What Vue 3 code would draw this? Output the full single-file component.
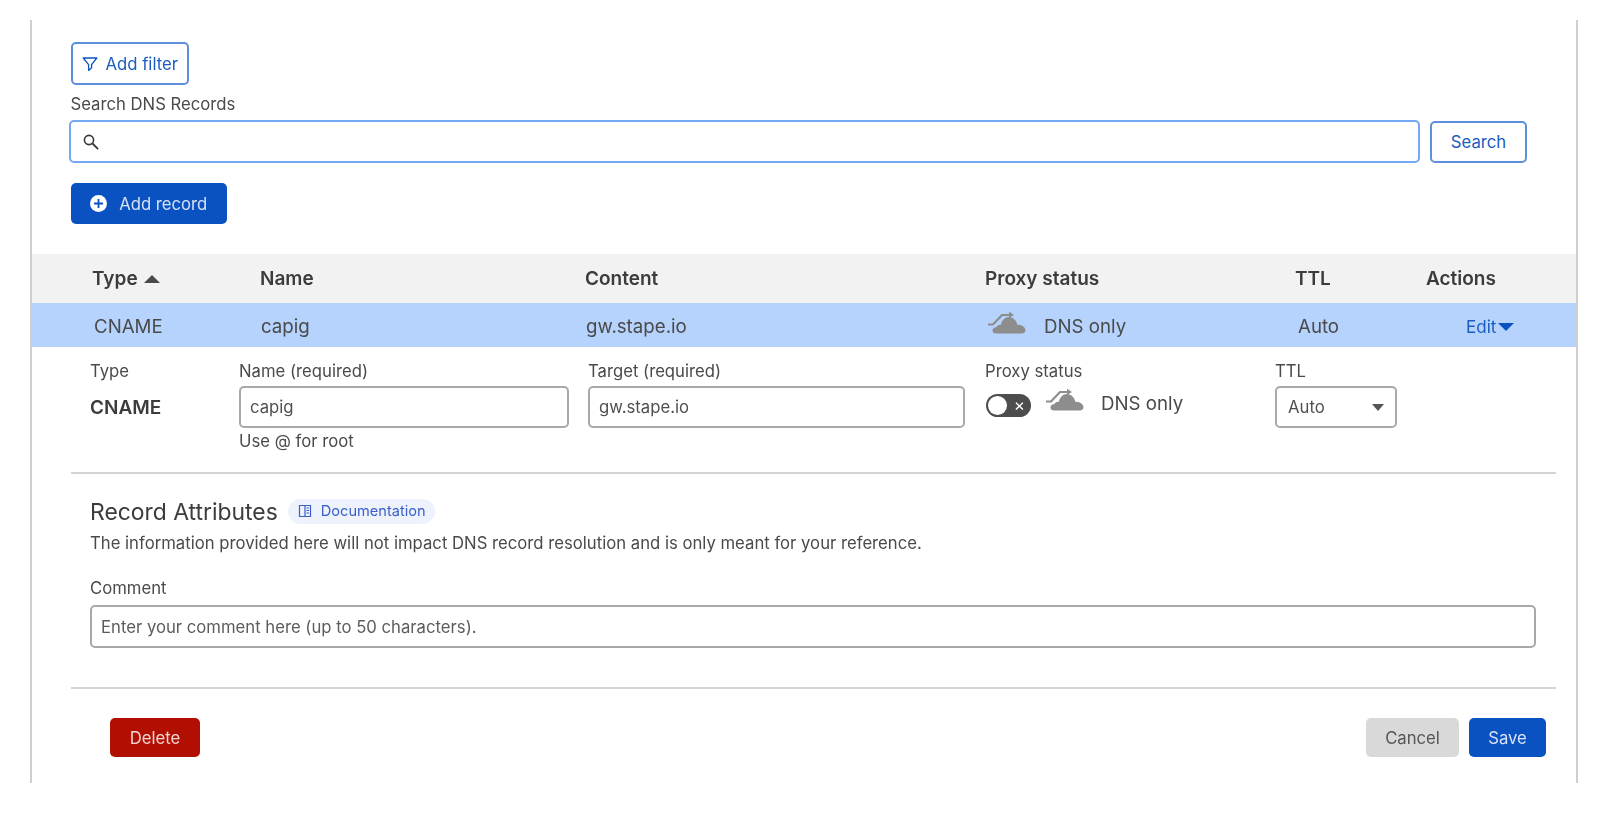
<script setup>
const columns = ["Name", "Content", "Proxy status", "TTL", "Actions"];
</script>

<template>
  <div class="frame">
    <div class="search-area">
      <button class="btn btn-outline filter-btn">
        <svg class="filter-icon" viewBox="0 0 16 16" width="16" height="16">
          <path d="M1.2 2h13.6L9.6 8.6v3.2L6.6 14.4V8.6z" fill="none" stroke="#0a55c4" stroke-width="1.3" stroke-linejoin="round" />
        </svg>
        Add filter
      </button>
      <label class="search-label">Search DNS Records</label>
      <div class="search-row">
        <div class="search-input">
          <svg viewBox="0 0 18 18" width="18" height="18">
            <circle cx="7" cy="7" r="4.6" fill="none" stroke="#36393a" stroke-width="1.6" />
            <path d="M10.5 10.5l5.6 5.6" stroke="#36393a" stroke-width="1.8" />
          </svg>
        </div>
        <button class="btn btn-outline search-btn">Search</button>
      </div>
      <button class="btn btn-primary add-btn">
        <svg viewBox="0 0 16 16" width="17" height="17">
          <circle cx="8" cy="8" r="8" fill="#fff" />
          <path d="M8 3.8v8.4M3.8 8h8.4" stroke="#0a51c2" stroke-width="1.7" />
        </svg>
        Add record
      </button>
    </div>

    <div class="table-head">
      <div class="type-head">Type <span class="sort-up"></span></div>
      <div v-for="col in columns" :key="col">{{ col }}</div>
    </div>
    <div class="table-row">
      <div>CNAME</div>
      <div>capig</div>
      <div>gw.stape.io</div>
      <div class="proxy">
        <svg class="cloud" viewBox="0 0 38 24" width="38" height="24">
          <path d="M0 14.500h5L14 5h8" fill="none" stroke="#8d8d8d" stroke-width="2.200" />
          <path d="M21 1.800l5 3.200-5 3z" fill="#8d8d8d" />
          <path d="M8 23.500c-2.200 0-3.500-1.400-3.500-3.100 0-1.900 1.700-3.400 3.800-3.100.8-1.800 2.500-2.800 4.500-2.500C14 10 17.300 6.800 21 7c4.400.2 7.500 3.600 8.300 7.800 3.900-.8 8.200 2.400 8.200 5.400 0 2-1.800 3.300-3.900 3.300z" fill="#8d8d8d" />
        </svg>
        <span>DNS only</span>
      </div>
      <div>Auto</div>
      <div class="edit">Edit<span class="edit-caret"></span></div>
    </div>

    <div class="edit-form">
      <div>
        <div class="field-label">Type</div>
        <div class="type-value">CNAME</div>
      </div>
      <div>
        <div class="field-label">Name (required)</div>
        <div class="text-input name-input">capig</div>
        <div class="hint">Use @ for root</div>
      </div>
      <div>
        <div class="field-label">Target (required)</div>
        <div class="text-input target-input">gw.stape.io</div>
      </div>
      <div>
        <div class="field-label">Proxy status</div>
        <div class="proxy-control">
          <span class="toggle">
            <span class="knob"></span>
            <span class="toggle-x">×</span>
          </span>
          <svg class="cloud" viewBox="0 0 38 24" width="38" height="24">
            <path d="M0 14.500h5L14 5h8" fill="none" stroke="#8d8d8d" stroke-width="2.200" />
            <path d="M21 1.800l5 3.200-5 3z" fill="#8d8d8d" />
            <path d="M8 23.500c-2.200 0-3.500-1.400-3.500-3.100 0-1.900 1.700-3.400 3.800-3.100.8-1.800 2.500-2.800 4.500-2.500C14 10 17.300 6.800 21 7c4.400.2 7.500 3.600 8.300 7.800 3.900-.8 8.200 2.400 8.200 5.400 0 2-1.800 3.300-3.900 3.300z" fill="#8d8d8d" />
          </svg>
          <span class="proxy-text">DNS only</span>
        </div>
      </div>
      <div>
        <div class="field-label">TTL</div>
        <div class="text-input ttl-select">Auto<span class="select-caret"></span></div>
      </div>
    </div>

    <div class="divider first"></div>

    <div class="attributes">
      <div class="attr-title">
        <h2>Record Attributes</h2>
        <span class="doc-pill">
          <svg viewBox="0 0 14 14" width="14" height="14">
            <path d="M1.500 1.500h11v11h-11zM7 1.500v11" fill="none" stroke="#3a5fc8" stroke-width="1.200" />
            <path d="M8.500 4h2.500M8.500 6.500h2.500M8.500 9h2.500" stroke="#3a5fc8" stroke-width="1" />
          </svg>
          Documentation
        </span>
      </div>
      <p class="attr-desc">The information provided here will not impact DNS record resolution and is only meant for your reference.</p>
      <div class="field-label comment-label">Comment</div>
      <div class="text-input comment-input">Enter your comment here (up to 50 characters).</div>
    </div>

    <div class="divider second"></div>

    <div class="footer">
      <button class="btn btn-danger">Delete</button>
      <div class="footer-right">
        <button class="btn btn-muted">Cancel</button>
        <button class="btn btn-primary save-btn">Save</button>
      </div>
    </div>
  </div>
</template>

<style>
body {
  background: #fff;
}
</style>

<style scoped>
.frame {
  box-sizing: border-box;
  width: 1548px;
  height: 763px;
  margin: 20px 0 0 30px;
  border-left: 2px solid #cfcfcf;
  border-right: 2px solid #cfcfcf;
  font-family: Inter, "Liberation Sans", sans-serif;
  font-size: 16.700px;
  color: #4a4a4a;
  filter: blur(0.4px);
}

.search-area {
  padding: 22px 49px 0 38.500px;
}

.btn {
  box-sizing: border-box;
  display: inline-flex;
  align-items: center;
  justify-content: center;
  border-radius: 5px;
  border: 0;
  font-family: inherit;
  font-size: 16.700px;
}

.btn-outline {
  background: #fff;
  border: 2px solid #5d8fdc;
  color: #1a5cc0;
}

.filter-btn {
  width: 118.500px;
  height: 43px;
  gap: 8px;
}

.search-label {
  display: block;
  margin-top: 9px;
  line-height: 20px;
}

.search-row {
  display: flex;
  gap: 10px;
  margin-top: 6px;
}

.search-input {
  box-sizing: border-box;
  display: flex;
  align-items: center;
  flex: 1;
  height: 43px;
  margin-left: -1.500px;
  padding-left: 11px;
  border: 2px solid #74a8f2;
  border-radius: 5px;
}

.search-btn {
  width: 97px;
  height: 42px;
  margin-top: 1px;
}

.btn-primary {
  background: #0a51c2;
  color: #d6e2f6;
}

.add-btn {
  width: 156.500px;
  height: 41px;
  gap: 12px;
  margin-top: 20px;
}

.table-head,
.table-row {
  display: grid;
  align-items: center;
}

.table-head {
  grid-template-columns: 168px 325px 400px 310px 131px 1fr;
  height: 49px;
  margin-top: 30px;
  padding-left: 60px;
  background: #f2f2f2;
  font-size: 19px;
  font-weight: 600;
  color: #3c3c3c;
}

.type-head {
  display: flex;
  align-items: center;
  gap: 6px;
}

.sort-up {
  width: 0;
  height: 0;
  border-left: 8px solid transparent;
  border-right: 8px solid transparent;
  border-bottom: 8px solid #4a4a4a;
}

.table-row {
  box-sizing: border-box;
  grid-template-columns: 167px 325px 402px 310px 168px 1fr;
  height: 44px;
  padding: 2px 0 0 62px;
  background: #b5d3fc;
  font-size: 18.700px;
}

.proxy {
  display: flex;
  align-items: center;
  gap: 18px;
}

.cloud {
  flex: none;
}

.proxy .cloud {
  margin-bottom: 8px;
}

.edit {
  display: flex;
  align-items: center;
  padding-top: 2px;
  color: #1a5cc0;
  font-size: 17px;
}

.edit-caret {
  margin-left: 2px;
  border-left: 8px solid transparent;
  border-right: 8px solid transparent;
  border-top: 8px solid #0a51c2;
}

.edit-form {
  display: grid;
  grid-template-columns: 149px 349px 397px 290px 122px;
  height: 125px;
  padding: 14px 0 0 58px;
  box-sizing: border-box;
}

.field-label {
  line-height: 20px;
}

.type-value {
  margin-top: 15px;
  line-height: 24px;
  font-size: 19px;
  font-weight: 600;
  color: #3c3c3c;
}

.text-input {
  box-sizing: border-box;
  display: flex;
  align-items: center;
  height: 42px;
  margin-top: 5px;
  padding-left: 9px;
  border: 2px solid #a9a9a9;
  border-radius: 5px;
  color: #4f4f4f;
}

.name-input {
  width: 330px;
}

.target-input {
  width: 377px;
}

.hint {
  margin-top: 2px;
  line-height: 22px;
}

.proxy-control {
  display: flex;
  align-items: center;
  height: 42px;
  margin-top: 2px;
}

.toggle {
  position: relative;
  display: block;
  flex: none;
  width: 45px;
  height: 23px;
  margin: 2px 15px 0 1px;
  border-radius: 12px;
  background: #4d4d4d;
}

.knob {
  position: absolute;
  top: 2px;
  left: 2px;
  width: 19px;
  height: 19px;
  border-radius: 50%;
  background: #fff;
}

.toggle-x {
  position: absolute;
  right: 6px;
  top: 0;
  line-height: 22px;
  font-size: 17px;
  color: #fff;
}

.proxy-control .cloud {
  margin-bottom: 10px;
}

.proxy-text {
  margin: 0 0 2px 17px;
  font-size: 18.700px;
}

.ttl-select {
  position: relative;
  width: 122px;
  padding-left: 11px;
}

.select-caret {
  position: absolute;
  right: 11px;
  top: 16px;
  border-left: 6px solid transparent;
  border-right: 6px solid transparent;
  border-top: 7px solid #555;
}

.divider {
  height: 2px;
  margin: 0 20px 0 39px;
  background: #d4d4d4;
}

.attributes {
  padding: 0 40px 0 58px;
}

.attr-title {
  display: flex;
  align-items: center;
  gap: 10px;
  margin-top: 24px;
}

.attr-title h2 {
  margin: 0;
  font-size: 22.900px;
  font-weight: 400;
  line-height: 28px;
  color: #3c3c3c;
}

.doc-pill {
  display: inline-flex;
  align-items: center;
  gap: 9px;
  height: 25px;
  margin-top: -2px;
  padding: 0 9px 0 10px;
  border-radius: 13px;
  background: #edf2fc;
  font-size: 14.600px;
  color: #3a5fc8;
}

.attr-desc {
  margin: 5px 0 0;
  line-height: 24px;
}

.comment-label {
  margin-top: 23px;
}

.comment-input {
  height: 43px;
  margin-top: 7px;
  color: #5c5c5c;
}

.divider.second {
  margin-top: 39px;
}

.footer {
  display: flex;
  justify-content: space-between;
  padding: 29px 30px 0 78px;
}

.footer .btn {
  height: 39px;
}

.btn-danger {
  width: 90px;
  background: #b20f03;
  color: #f3d6d3;
}

.footer-right {
  display: flex;
  gap: 10px;
}

.btn-muted {
  width: 93px;
  background: #d9d9d9;
  color: #555;
}

.save-btn {
  width: 77px;
}
</style>
